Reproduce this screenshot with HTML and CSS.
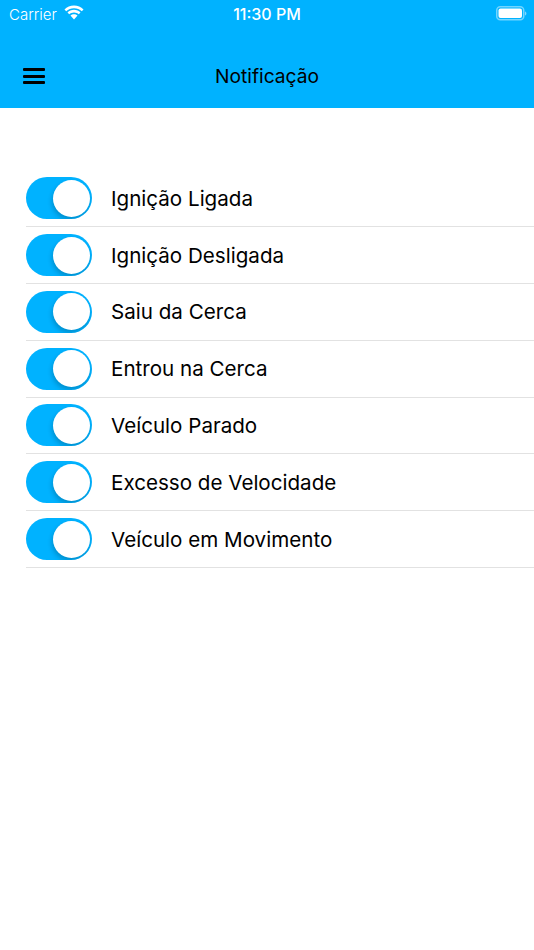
FILE: index.html
```html
<!DOCTYPE html>
<html lang="en">
<head>
    <meta charset="UTF-8">
    <title>Notificação</title>
    <link rel="stylesheet" href="styles.css">
</head>
<body>
    <header class="header">
        <div class="status-bar">
            <div class="status-left">
                <span>Carrier</span>
                <svg class="wifi" width="20" height="15" viewBox="0.500 0 19 14.500">
                    <path d="M10 3.100c2.900 0 5.500 1.100 7.500 3l1.700-1.800C16.800 2 13.600.6 10 .6S3.200 2 .8 4.300l1.700 1.800c2-1.900 4.600-3 7.500-3z" fill="#fff"/>
                    <path d="M10 7.200c1.800 0 3.400.7 4.600 1.800l1.700-1.800C14.700 5.600 12.500 4.700 10 4.700s-4.700.9-6.300 2.500L5.400 9C6.600 7.900 8.200 7.200 10 7.200z" fill="#fff"/>
                    <path d="M10 8.900c-1.300 0-2.500.5-3.400 1.300l3.400 3.900 3.400-3.900c-.9-.8-2.100-1.300-3.400-1.300z" fill="#fff"/>
                </svg>
            </div>
            <span class="status-time">11:30 PM</span>
            <svg class="battery" width="31" height="15" viewBox="0 0 31 15">
                <rect x="0.750" y="0.750" width="27" height="13" rx="3.500" fill="none" stroke="#fff" stroke-opacity="0.45" stroke-width="1.500"/>
                <rect x="2.500" y="2.500" width="23.500" height="9.500" rx="2" fill="#fff"/>
                <path d="M29 5.500v4c.8-.3 1.400-1.100 1.400-2s-.6-1.700-1.400-2z" fill="#fff" fill-opacity="0.5"/>
            </svg>
        </div>
        <div class="nav-bar">
            <div class="menu-icon">
                <span></span>
                <span></span>
                <span></span>
            </div>
            <h1 class="nav-title">Notificação</h1>
        </div>
    </header>

    <ul class="list">
        <li class="row"><span class="toggle"><span class="knob"></span></span><span class="row-label">Ignição Ligada</span></li>
        <li class="row"><span class="toggle"><span class="knob"></span></span><span class="row-label">Ignição Desligada</span></li>
        <li class="row"><span class="toggle"><span class="knob"></span></span><span class="row-label">Saiu da Cerca</span></li>
        <li class="row"><span class="toggle"><span class="knob"></span></span><span class="row-label">Entrou na Cerca</span></li>
        <li class="row"><span class="toggle"><span class="knob"></span></span><span class="row-label">Veículo Parado</span></li>
        <li class="row"><span class="toggle"><span class="knob"></span></span><span class="row-label">Excesso de Velocidade</span></li>
        <li class="row"><span class="toggle"><span class="knob"></span></span><span class="row-label">Veículo em Movimento</span></li>
    </ul>
</body>
</html>
```

FILE: styles.css
```css
:root {
    --blue: #00b2ff;
    --line: #e2e2e2;
}

* {
    margin: 0;
    padding: 0;
    box-sizing: border-box;
    font-family: 'Inter', 'Liberation Sans', Arial, sans-serif;
}

html, body {
    height: 100%;
    background: #fff;
    overflow: hidden;
}

.header {
    height: 108px;
    background: var(--blue);
}

.status-bar {
    height: 28px;
    padding: 0 7px 0 9px;
    display: flex;
    align-items: center;
    justify-content: space-between;
    position: relative;
    color: #fff;
    font-size: 15px;
}

.status-left {
    display: flex;
    align-items: center;
    gap: 7px;
    font-weight: 300;
}

.wifi {
    margin-top: -3px;
}

.status-time {
    position: absolute;
    left: 0;
    right: 0;
    text-align: center;
    font-size: 16px;
    font-weight: 500;
}

.battery {
    margin-top: -1px;
}

.nav-bar {
    height: 64px;
    margin-top: 16px;
    position: relative;
    display: flex;
    align-items: center;
    justify-content: center;
}

.nav-title {
    font-size: 19.200px;
    font-weight: 400;
    color: #000;
}

.menu-icon {
    position: absolute;
    left: 23px;
    top: 24px;
    width: 22px;
    display: flex;
    flex-direction: column;
    gap: 3.500px;
}

.menu-icon span {
    display: block;
    height: 3px;
    border-radius: 1px;
    background: #000;
}

.list {
    list-style: none;
    margin: 62.400px 0 0 26px;
}

.row {
    height: 56.800px;
    display: flex;
    align-items: center;
    gap: 19px;
    border-bottom: 1px solid var(--line);
}

.toggle {
    width: 66px;
    height: 42px;
    border-radius: 21px;
    overflow: hidden;
    background: var(--blue);
    display: flex;
    justify-content: flex-end;
    align-items: center;
    padding-right: 2px;
}

.knob {
    width: 37px;
    height: 37px;
    border-radius: 50%;
    background: #fff;
    box-shadow: -1px 3px 5px rgba(0, 0, 0, 0.2);
}

.row-label {
    font-size: 20.600px;
    color: #000;
}
```
